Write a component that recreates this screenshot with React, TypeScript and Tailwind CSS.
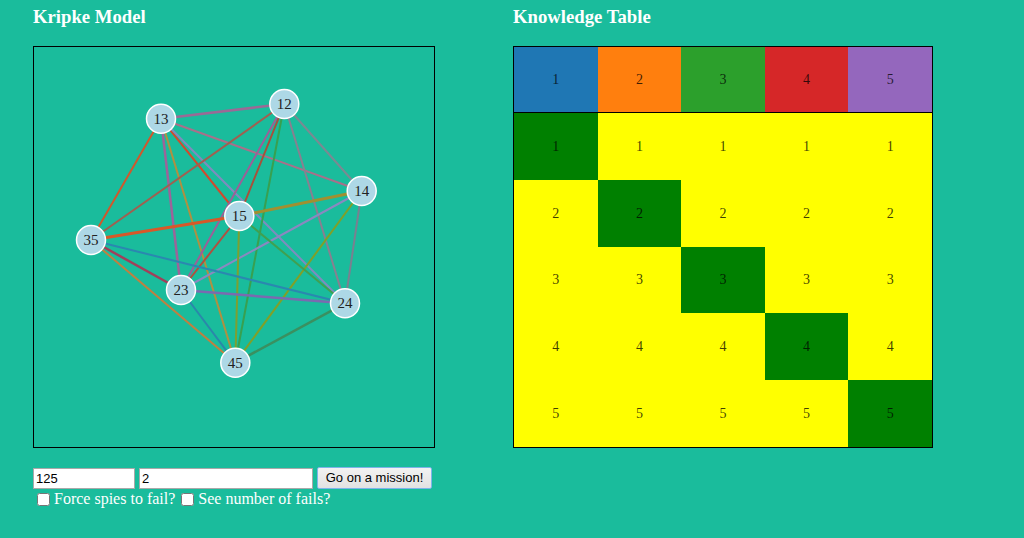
import React from 'react'

type Node = { id: string; x: number; y: number }

const nodes: Node[] = [
  { id: '12', x: 250.3, y: 57 },
  { id: '13', x: 127, y: 71.7 },
  { id: '14', x: 327.7, y: 144 },
  { id: '15', x: 205.3, y: 169 },
  { id: '35', x: 57, y: 193 },
  { id: '23', x: 147, y: 243 },
  { id: '24', x: 311, y: 256.3 },
  { id: '45', x: 201.3, y: 315.7 },
]

// edges between worlds, colour approximates the agents relating them
const edges: [string, string, string, number?][] = [
  ['13', '12', '#9a6a96', 2.5],
  ['13', '14', '#a8708a'],
  ['13', '35', '#d0582c'],
  ['13', '15', '#d24a2c'],
  ['13', '24', '#7e8cbe'],
  ['13', '23', '#9c649a', 2.5],
  ['13', '45', '#b09040'],
  ['12', '35', '#a06050'],
  ['12', '23', '#9c5f98'],
  ['12', '15', '#a8503a'],
  ['12', '45', '#38a050'],
  ['12', '24', '#888090'],
  ['12', '14', '#7a8a92'],
  ['14', '15', '#a09030', 3],
  ['14', '23', '#8a88c0'],
  ['14', '45', '#80a028'],
  ['14', '24', '#7a8090'],
  ['15', '35', '#d85828', 3],
  ['15', '23', '#b05040'],
  ['15', '45', '#7ea030'],
  ['15', '24', '#40a050'],
  ['35', '23', '#a0405a', 2.5],
  ['35', '24', '#2a88b0'],
  ['35', '45', '#c08040'],
  ['23', '24', '#7a6ab0', 2.5],
  ['23', '45', '#2a88aa'],
  ['24', '45', '#3a9060', 2.5],
]

const agentColors = ['bg-[#1f77b4]', 'bg-[#ff7f0e]', 'bg-[#2ca02c]', 'bg-[#d62728]', 'bg-[#9467bd]']

function KripkeGraph() {
  const pos = (id: string) => nodes.find((n) => n.id === id)!
  return (
    <svg width={400} height={400} className="block border border-black box-content">
      {edges.map(([a, b, color, w], i) => {
        const p = pos(a)
        const q = pos(b)
        return (
          <line key={i} x1={p.x} y1={p.y} x2={q.x} y2={q.y} stroke={color} strokeWidth={w ?? 2} />
        )
      })}
      {nodes.map((n) => (
        <g key={n.id}>
          <circle cx={n.x} cy={n.y} r={14.5} fill="#add8e6" stroke="#fff" strokeWidth={1.5} />
          <text
            x={n.x}
            y={n.y + 5}
            textAnchor="middle"
            fontSize={15}
            fill="#222"
            fontFamily="'Liberation Serif', serif"
          >
            {n.id}
          </text>
        </g>
      ))}
    </svg>
  )
}

export default function App() {
  const rows = [1, 2, 3, 4, 5]
  return (
    <div className="min-h-[538px] w-[1024px] bg-[#1abc9c] font-['Liberation_Serif',serif] flex gap-[78px] pl-[33px]">
      {/* Left: Kripke model */}
      <div className="w-[402px]">
        <h3 className="h-[46px] pt-[6px] text-[18.72px] leading-[22px] font-bold text-white">Kripke Model</h3>
        <KripkeGraph />

        <div className="mt-[19px] flex items-center gap-[4px] font-['Liberation_Sans',sans-serif] text-[13px]">
          <input
            defaultValue="125"
            className="w-[102px] h-[21px] bg-white border border-[#a9a9a9] px-[2px] text-black outline-none"
          />
          <input
            defaultValue="2"
            className="w-[174px] h-[21px] bg-white border border-[#a9a9a9] px-[2px] text-black outline-none"
          />
          <button className="w-[115px] h-[22px] border border-[#7eb4ea] bg-gradient-to-b from-[#f2f2f2] to-[#e2e2e2] text-black rounded-[2px]">
            Go on a mission!
          </button>
        </div>
        <div className="flex items-center h-[20px] text-[16px] text-white">
          <input type="checkbox" className="ml-[4px] mr-[4px] w-[13px] h-[13px]" />
          <span>Force spies to fail?</span>
          <input type="checkbox" className="ml-[6px] mr-[4px] w-[13px] h-[13px]" />
          <span>See number of fails?</span>
        </div>
      </div>

      {/* Right: knowledge table */}
      <div className="w-[420px]">
        <h3 className="h-[46px] pt-[6px] text-[18.72px] leading-[22px] font-bold text-white">Knowledge Table</h3>
        <div className="border border-black text-[14px] text-black/75">
          <div className="grid grid-cols-5 h-[66px] border-b border-black">
            {rows.map((a, i) => (
              <div key={a} className={`${agentColors[i]} flex items-center justify-center`}>
                {a}
              </div>
            ))}
          </div>
          {rows.map((r) => (
            <div key={r} className="grid grid-cols-5 h-[66.8px]">
              {rows.map((c) => (
                <div
                  key={c}
                  className={`flex items-center justify-center ${r === c ? 'bg-[#008000]' : 'bg-[#ffff00]'}`}
                >
                  {r}
                </div>
              ))}
            </div>
          ))}
        </div>
      </div>
    </div>
  )
}
